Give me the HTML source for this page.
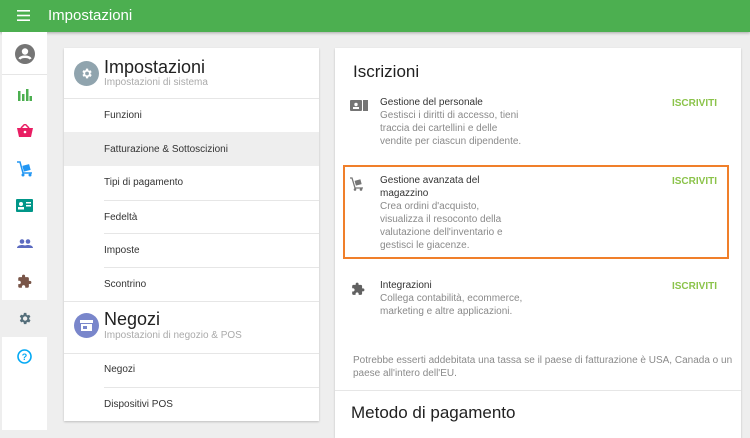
<!DOCTYPE html>
<html><head><meta charset="utf-8"><style>
*{margin:0;padding:0;box-sizing:border-box}
body{width:750px;height:433px;overflow:hidden;background:#eeeeee;font-family:"Liberation Sans",sans-serif;position:relative}
.hdr{position:absolute;left:0;top:0;width:750px;height:32px;background:#4caf50;box-shadow:0 1px 3px rgba(0,0,0,.3)}
.hdr .t{position:absolute;left:48px;top:7px;color:#fff;font-size:15px}
.side{position:absolute;left:2px;top:32px;width:45px;height:398px;background:#fff}
.si{position:absolute;left:0;width:45px;height:37px;display:flex;align-items:center;justify-content:center}
.card{position:absolute;background:#fff;box-shadow:0 1px 2px rgba(0,0,0,.2)}
.abs{position:absolute}
.item{position:absolute;left:40px;right:0;height:33px;font-size:10px;color:#333;padding-top:11px;border-top:1px solid #e6e6e6}
.sub{font-size:10px;color:#999}
.d{font-size:10px;color:#8a8a8a;line-height:13px}
.ti{font-size:10px;color:#333;line-height:13px}
.isc{position:absolute;right:24px;font-size:10px;font-weight:bold;color:#8bc34a}
</style></head><body>
<div class="hdr">
<svg class="abs" style="left:17px;top:10px" width="13" height="11"><rect y="0" width="13" height="1.6" fill="#fff"/><rect y="4.7" width="13" height="1.6" fill="#fff"/><rect y="9.4" width="13" height="1.6" fill="#fff"/></svg>
<div class="t">Impostazioni</div></div>
<div class="side">
<div class="si" style="top:3px"><svg width="20" height="20" viewBox="0 0 20 20"><circle cx="10" cy="10" r="10" fill="#757575"/><circle cx="10" cy="7.5" r="3.2" fill="#fff"/><path d="M4.5 15c1.5-3 9.5-3 11 0" stroke="#fff" stroke-width="2.5" fill="none"/></svg></div>
<div class="abs" style="left:0;top:42px;width:45px;height:1px;background:#e6e6e6"></div>
<div class="si" style="top:44px"><svg width="14" height="12"><rect x="0" y="2" width="2.5" height="10" fill="#4caf50"/><rect x="4" y="5" width="2.5" height="7" fill="#4caf50"/><rect x="8" y="0" width="2.5" height="12" fill="#4caf50"/><rect x="11.5" y="7" width="2.5" height="5" fill="#4caf50"/></svg></div>
<div class="si" style="top:80px"><svg width="16" height="13"><path d="M0 4h16l-2 9H2z" fill="#e91e63"/><path d="M4 4l4-4 4 4" stroke="#e91e63" fill="none" stroke-width="1.5"/><circle cx="8" cy="8" r="1.3" fill="#fff"/></svg></div>
<div class="si" style="top:118px"><svg width="16" height="16"><path d="M0 1h3l3 11h9" stroke="#2196f3" fill="none" stroke-width="1.5"/><rect x="6" y="4" width="7" height="6" fill="#2196f3" transform="rotate(-15 9 7)"/><circle cx="6" cy="14" r="1.5" fill="#2196f3"/><circle cx="13" cy="14" r="1.5" fill="#2196f3"/></svg></div>
<div class="si" style="top:155px"><svg width="17" height="13"><rect width="17" height="13" rx="1" fill="#009688"/><circle cx="5" cy="5" r="2" fill="#fff"/><rect x="2" y="8" width="6" height="2.5" fill="#fff"/><rect x="10" y="3" width="5" height="1.5" fill="#fff"/><rect x="10" y="6" width="5" height="1.5" fill="#fff"/></svg></div>
<div class="si" style="top:193px"><svg width="16" height="9"><circle cx="5" cy="2.5" r="2.3" fill="#5c6bc0"/><circle cx="11" cy="2.5" r="2.3" fill="#5c6bc0"/><path d="M0 9c0-4 10-4 10 0zM6 9c0-4 10-4 10 0z" fill="#5c6bc0"/></svg></div>
<div class="si" style="top:231px"><svg width="15" height="15" viewBox="0 0 24 24"><path d="M20.5 11H19V7c0-1.1-.9-2-2-2h-4V3.5a2.5 2.5 0 0 0-5 0V5H4c-1.1 0-2 .9-2 2v3.8h1.5c1.5 0 2.7 1.2 2.7 2.7S5 16.2 3.5 16.2H2V20c0 1.1.9 2 2 2h3.8v-1.5c0-1.5 1.2-2.7 2.7-2.7s2.7 1.2 2.7 2.7V22H17c1.1 0 2-.9 2-2v-4h1.5a2.5 2.5 0 0 0 0-5z" fill="#795548"/></svg></div>
<div class="si" style="top:268px;background:#eeeeee"><svg width="15" height="15" viewBox="0 0 24 24"><path d="M19.4 13a7.5 7.5 0 0 0 0-2l2.1-1.6-2-3.5-2.5 1a7.3 7.3 0 0 0-1.7-1L15 3h-4l-.4 2.7a7.3 7.3 0 0 0-1.7 1l-2.5-1-2 3.5L6.6 11a7.5 7.5 0 0 0 0 2l-2.1 1.6 2 3.5 2.5-1c.5.4 1.1.7 1.700 1L11 21h4l.4-2.7c.6-.3 1.2-.6 1.7-1l2.5 1 2-3.5zM13 15.5a3.5 3.5 0 1 1 0-7 3.5 3.5 0 0 1 0 7z" fill="#546e7a"/></svg></div>
<div class="si" style="top:306px"><svg width="15" height="15"><circle cx="7.5" cy="7.5" r="6.5" stroke="#03a9f4" stroke-width="1.6" fill="none"/><text x="7.5" y="11" font-size="9" font-weight="bold" text-anchor="middle" fill="#03a9f4" font-family="Liberation Sans">?</text></svg></div>
</div>

<div class="card" style="left:64px;top:48px;width:255px;height:373px">
<div class="abs" style="left:10px;top:13px;width:25px;height:25px;border-radius:50%;background:#90a4ae"><svg style="position:absolute;left:6px;top:6px" width="13" height="13" viewBox="0 0 24 24"><path d="M19.4 13a7.5 7.5 0 0 0 0-2l2.1-1.6-2-3.5-2.5 1a7.3 7.3 0 0 0-1.7-1L15 3h-4l-.4 2.7a7.3 7.3 0 0 0-1.7 1l-2.5-1-2 3.5L6.6 11a7.5 7.5 0 0 0 0 2l-2.1 1.6 2 3.5 2.5-1c.5.4 1.1.7 1.7 1L11 21h4l.4-2.7c.6-.3 1.2-.6 1.7-1l2.5 1 2-3.5zM13 15.5a3.5 3.5 0 1 1 0-7 3.5 3.5 0 0 1 0 7z" fill="#fff"/></svg></div>
<div class="abs" style="left:40px;top:9px;font-size:18px;color:#212121">Impostazioni</div>
<div class="abs sub" style="left:40px;top:29px;color:#aaa">Impostazioni di sistema</div>
<div class="abs" style="left:0;right:0;top:50px;height:1px;background:#e6e6e6"></div>
<div class="item" style="top:51px;border-top:none">Funzioni</div>
<div class="abs" style="left:0;right:0;top:84px;height:34px;background:#eeeeee"></div>
<div class="item" style="top:85px;border-top:none">Fatturazione &amp; Sottoscizioni</div>
<div class="item" style="top:118px;border-top:none">Tipi di pagamento</div>
<div class="item" style="top:152px">Fedeltà</div>
<div class="item" style="top:185px">Imposte</div>
<div class="item" style="top:219px">Scontrino</div>
<div class="abs" style="left:0;right:0;top:253px;height:1px;background:#e6e6e6"></div>
<div class="abs" style="left:10px;top:265px;width:25px;height:25px;border-radius:50%;background:#7986cb"><svg style="position:absolute;left:6px;top:7px" width="13" height="11"><rect x="0" y="0" width="13" height="3" fill="#fff"/><rect x="1" y="4" width="11" height="7" fill="#fff"/><rect x="3" y="6" width="4" height="3" fill="#7986cb"/></svg></div>
<div class="abs" style="left:40px;top:261px;font-size:18px;color:#212121">Negozi</div>
<div class="abs sub" style="left:40px;top:282px;color:#aaa">Impostazioni di negozio &amp; POS</div>
<div class="abs" style="left:0;right:0;top:305px;height:1px;background:#e6e6e6"></div>
<div class="item" style="top:305px;border-top:none">Negozi</div>
<div class="item" style="top:339px">Dispositivi POS</div>
</div>

<div class="card" style="left:335px;top:48px;width:406px;height:390px">
<div class="abs" style="left:18px;top:14px;font-size:17px;color:#212121">Iscrizioni</div>
<svg class="abs" style="left:15px;top:52px" width="18" height="11"><rect width="12" height="11" rx="1" fill="#757575"/><rect x="13" width="5" height="11" fill="#757575"/><circle cx="6" cy="4.5" r="1.7" fill="#fff"/><rect x="3" y="7" width="6" height="2" fill="#fff"/></svg>
<div class="abs" style="left:45px;top:48px;width:150px"><div class="ti">Gestione del personale</div><div class="d">Gestisci i diritti di accesso, tieni traccia dei cartellini e delle vendite per ciascun dipendente.</div></div>
<div class="isc" style="top:50px">ISCRIVITI</div>
<div class="abs" style="left:8px;top:117px;width:386px;height:94px;border:2px solid #f07f2a"></div>
<svg class="abs" style="left:15px;top:129px" width="14" height="14"><path d="M0 1h2l3 10h8" stroke="#757575" fill="none" stroke-width="1.3"/><rect x="5" y="3" width="6" height="5" fill="#757575" transform="rotate(-15 8 5)"/><circle cx="5" cy="12.5" r="1.3" fill="#757575"/><circle cx="11" cy="12.5" r="1.3" fill="#757575"/></svg>
<div class="abs" style="left:45px;top:126px;width:130px"><div class="ti">Gestione avanzata del magazzino</div><div class="d">Crea ordini d'acquisto, visualizza il resoconto della valutazione dell'inventario e gestisci le giacenze.</div></div>
<div class="isc" style="top:128px">ISCRIVITI</div>
<svg class="abs" style="left:16px;top:234px" width="14" height="14" viewBox="0 0 24 24"><path d="M20.5 11H19V7c0-1.1-.9-2-2-2h-4V3.5a2.5 2.5 0 0 0-5 0V5H4c-1.1 0-2 .9-2 2v3.8h1.5c1.5 0 2.7 1.2 2.7 2.7S5 16.2 3.5 16.2H2V20c0 1.1.9 2 2 2h3.8v-1.5c0-1.5 1.2-2.7 2.7-2.7s2.7 1.2 2.7 2.7V22H17c1.1 0 2-.9 2-2v-4h1.5a2.5 2.5 0 0 0 0-5z" fill="#616161"/></svg>
<div class="abs" style="left:45px;top:231px;width:180px"><div class="ti">Integrazioni</div><div class="d">Collega contabilità, ecommerce, marketing e altre applicazioni.</div></div>
<div class="isc" style="top:233px">ISCRIVITI</div>
<div class="abs d" style="left:18px;top:306px;width:385px">Potrebbe esserti addebitata una tassa se il paese di fatturazione è USA, Canada o un paese all'intero dell'EU.</div>
<div class="abs" style="left:0;right:0;top:342px;height:1px;background:#e6e6e6"></div>
<div class="abs" style="left:16px;top:355px;font-size:17px;color:#212121">Metodo di pagamento</div>
</div>
</body></html>
